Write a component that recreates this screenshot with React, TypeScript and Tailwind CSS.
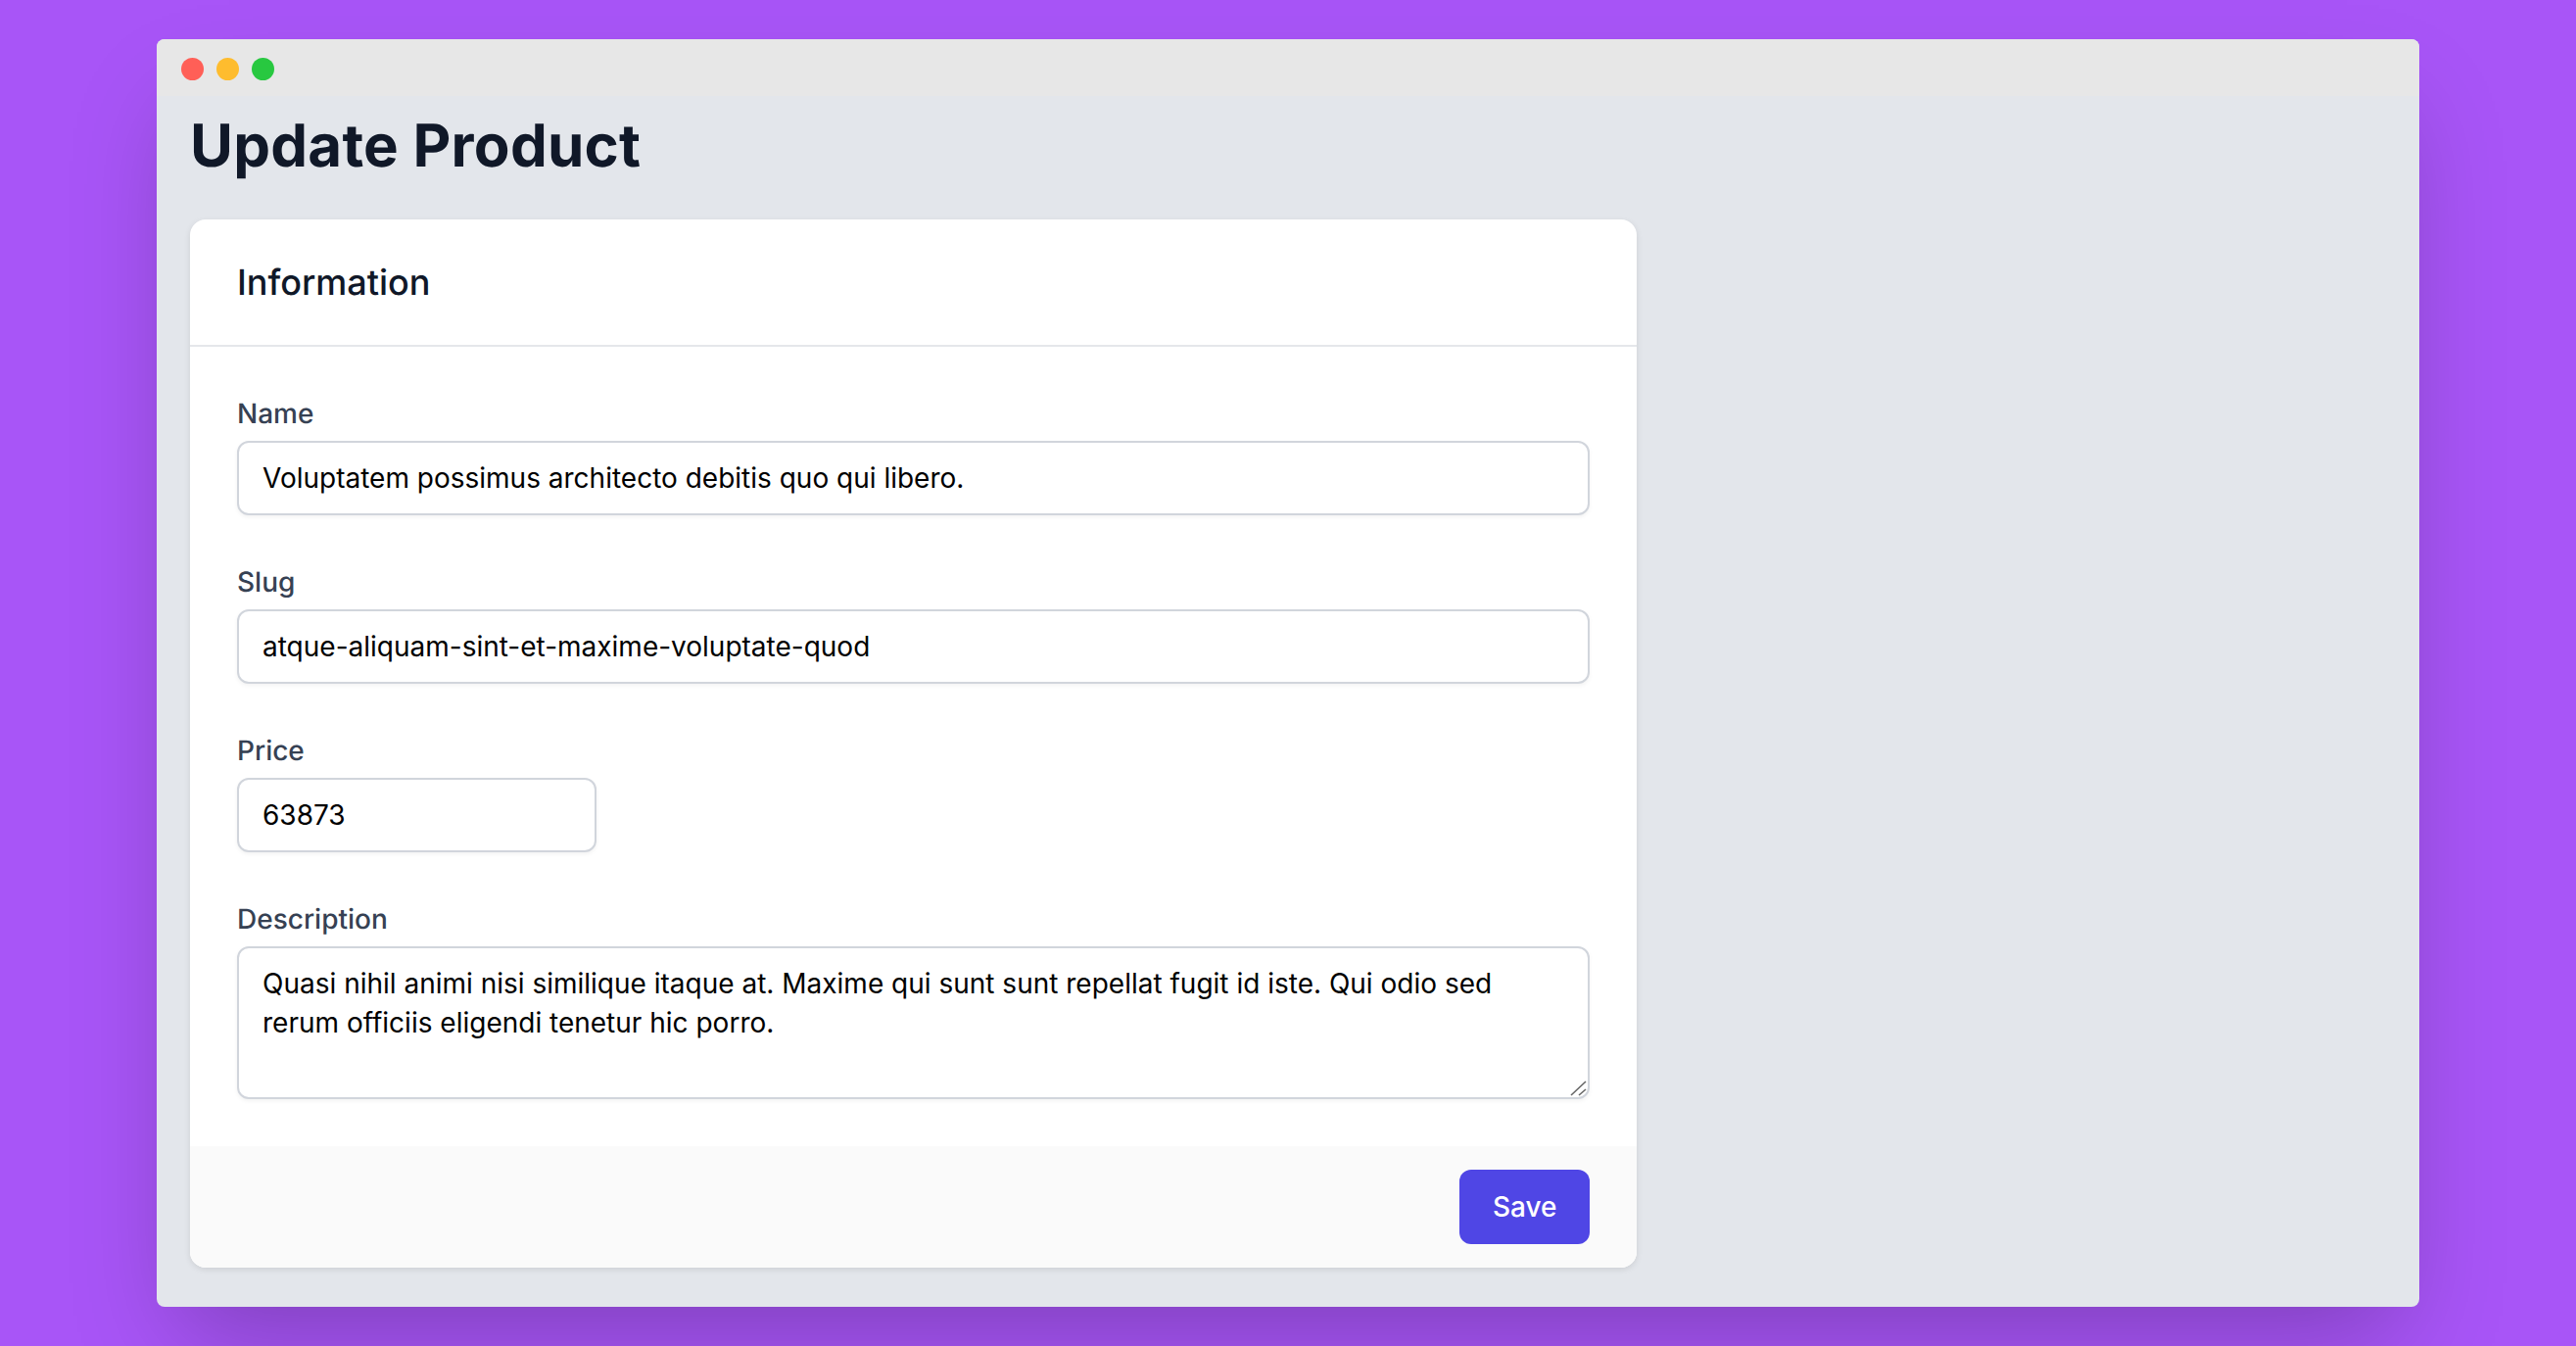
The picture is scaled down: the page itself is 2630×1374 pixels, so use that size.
const inputClass =
  'block w-full rounded-xl border-2 border-gray-300 bg-white px-6 py-4 text-[28px] leading-10 text-black shadow-[0_2px_4px_rgba(0,0,0,0.05)] outline-none'

function Field({ label, children }: { label: string; children: React.ReactNode }) {
  return (
    <div>
      <label className="mb-2 block text-[28px] leading-10 font-medium text-gray-700">{label}</label>
      {children}
    </div>
  )
}

export default function App() {
  return (
    <div className="min-h-screen bg-[#a855f7] px-40 pt-10 font-['Inter',sans-serif] [font-optical-sizing:none] [text-rendering:geometricPrecision]">
      <div className="overflow-hidden rounded-lg bg-[#e3e6eb] shadow-[0_50px_100px_-24px_rgba(0,0,0,0.25)]">
        <div className="flex h-[58px] items-center gap-[13px] bg-[#e7e7e7] pt-[2px] pl-[25px]">
          <span className="size-[23px] rounded-full bg-[#ff5f57]" />
          <span className="size-[23px] rounded-full bg-[#febc2e]" />
          <span className="size-[23px] rounded-full bg-[#28c840]" />
        </div>
        <div className="px-[34px] pt-[15px] pb-10">
          <h1 className="mb-[39px] text-[60px] leading-[72px] font-bold tracking-[0.25px] text-gray-900">Update Product</h1>
          <div className="w-[1477px] overflow-hidden rounded-2xl bg-white shadow-[0_2px_6px_rgba(0,0,0,0.1)]">
            <div className="border-b-2 border-gray-200 px-12 py-10">
              <h2 className="text-4xl leading-12 font-medium text-gray-900">Information</h2>
            </div>
            <div className="flex flex-col gap-12 p-12">
              <Field label="Name">
                <input className={inputClass} defaultValue="Voluptatem possimus architecto debitis quo qui libero." />
              </Field>
              <Field label="Slug">
                <input className={inputClass} defaultValue="atque-aliquam-sint-et-maxime-voluptate-quod" />
              </Field>
              <Field label="Price">
                <div className="w-[367px]">
                  <input className={inputClass} defaultValue="63873" />
                </div>
              </Field>
              <Field label="Description">
                <div className="relative">
                  <textarea
                    rows={3}
                    className={`${inputClass} resize-none`}
                    defaultValue="Quasi nihil animi nisi similique itaque at. Maxime qui sunt sunt repellat fugit id iste. Qui odio sed rerum officiis eligendi tenetur hic porro."
                  />
                  {/* resize handle at 2x */}
                  <svg className="pointer-events-none absolute right-[3px] bottom-[3px] size-5" viewBox="0 0 20 20" fill="none" stroke="#666" strokeWidth="1.6">
                    <path d="M4 19 19 5M12 19l7-6" />
                  </svg>
                </div>
              </Field>
            </div>
            <div className="flex justify-end bg-[#fafafa] px-12 py-6">
              <button className="rounded-xl border-2 border-transparent bg-[#4f46e5] px-[31.5px] py-4 text-[28px] leading-10 font-medium text-white">
                Save
              </button>
            </div>
          </div>
        </div>
      </div>
    </div>
  )
}
